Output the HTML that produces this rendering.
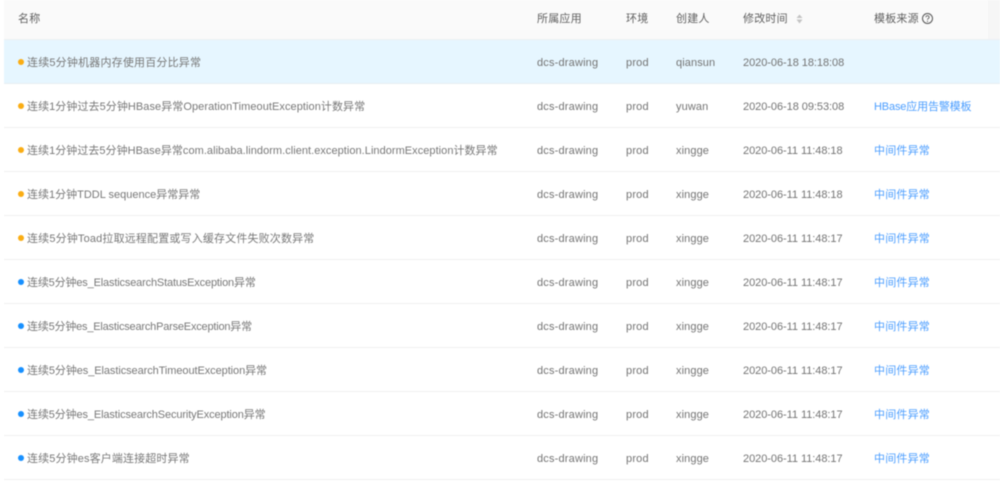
<!DOCTYPE html>
<html><head><meta charset="utf-8">
<style>
html,body{margin:0;padding:0;background:#fff;width:1000px;height:482px;overflow:hidden}
body{font-family:"Liberation Sans","Noto Sans CJK SC",sans-serif;font-size:11px;color:#737373;position:relative}
#w{position:absolute;left:0;top:0;width:1000px;height:482px;filter:blur(.45px)}
.hd{position:absolute;left:4px;top:0;width:996px;height:39px;background:#fafafa;border-bottom:1px solid #eef0f2}
.hd2{position:absolute;left:988px;top:0;width:12px;height:39px;background:#f6f6f6}
.r{position:absolute;left:4px;width:996px;height:43px;border-bottom:1px solid #f0f0f0}
.r.a{background:#e6f6ff;border-bottom-color:#e8eef2}
.r span,.hd span{position:absolute;white-space:nowrap;line-height:16px;top:15px}
.hd span{top:11px;color:#5f5f5f;letter-spacing:.2px}
.c1{left:23px;width:500px;color:#787878}
.c2{left:533px;letter-spacing:.18px}.c3{left:622px;letter-spacing:.2px}.c4{left:672px;letter-spacing:.1px}.c5{left:739px;letter-spacing:-.05px}
.c6{left:870px;color:#4a9dff}
.d{position:absolute;left:14px;top:19px;width:6px;height:6px;border-radius:50%}
.o{background:#faad14}.b{background:#1890ff}
svg{position:absolute}
</style></head><body><div id="w">
<div class="hd">
<span style="left:14px">名称</span>
<span style="left:533px">所属应用</span>
<span style="left:622px">环境</span>
<span style="left:672px">创建人</span>
<span style="left:739px">修改时间</span>
<span style="left:870px">模板来源</span>
</div>
<div class="hd2"></div>
<svg style="left:796px;top:14px" width="7" height="10" viewBox="0 0 7 10"><path d="M3.500 .5L6.500 4H.5z M.5 5.500h6L3.500 9.500z" fill="#c4c4c4"/></svg>
<svg style="left:921px;top:12px" width="13" height="13" viewBox="0 0 13 13"><circle cx="6.500" cy="6.500" r="5" fill="none" stroke="#555" stroke-width="1"/><path d="M4.900 5.200a1.600 1.500 0 1 1 2.400 1.300c-.6.400-.8.600-.8 1.200" fill="none" stroke="#555" stroke-width=".9"/><circle cx="6.500" cy="9.300" r=".6" fill="#555"/></svg>

<div class="r a" style="top:40px"><i class="d o"></i><span class="c1" style="letter-spacing:.19px">连续5分钟机器内存使用百分比异常</span><span class="c2">dcs-drawing</span><span class="c3">prod</span><span class="c4">qiansun</span><span class="c5">2020-06-18 18:18:08</span></div>
<div class="r" style="top:84px"><i class="d o"></i><span class="c1" style="letter-spacing:.065px">连续1分钟过去5分钟HBase异常OperationTimeoutException计数异常</span><span class="c2">dcs-drawing</span><span class="c3">prod</span><span class="c4">yuwan</span><span class="c5">2020-06-18 09:53:08</span><span class="c6" style="letter-spacing:-.15px">HBase应用告警模板</span></div>
<div class="r" style="top:128px"><i class="d o"></i><span class="c1" style="letter-spacing:.04px">连续1分钟过去5分钟HBase异常com.alibaba.lindorm.client.exception.LindormException计数异常</span><span class="c2">dcs-drawing</span><span class="c3">prod</span><span class="c4">xingge</span><span class="c5">2020-06-11 11:48:18</span><span class="c6" style="letter-spacing:.2px">中间件异常</span></div>
<div class="r" style="top:172px"><i class="d o"></i><span class="c1">连续1分钟TDDL sequence异常异常</span><span class="c2">dcs-drawing</span><span class="c3">prod</span><span class="c4">xingge</span><span class="c5">2020-06-11 11:48:18</span><span class="c6" style="letter-spacing:.2px">中间件异常</span></div>
<div class="r" style="top:216px"><i class="d o"></i><span class="c1" style="letter-spacing:.16px">连续5分钟Toad拉取远程配置或写入缓存文件失败次数异常</span><span class="c2">dcs-drawing</span><span class="c3">prod</span><span class="c4">xingge</span><span class="c5">2020-06-11 11:48:17</span><span class="c6" style="letter-spacing:.2px">中间件异常</span></div>
<div class="r" style="top:260px"><i class="d b"></i><span class="c1" style="letter-spacing:-.16px">连续5分钟es_ElasticsearchStatusException异常</span><span class="c2">dcs-drawing</span><span class="c3">prod</span><span class="c4">xingge</span><span class="c5">2020-06-11 11:48:17</span><span class="c6" style="letter-spacing:.2px">中间件异常</span></div>
<div class="r" style="top:304px"><i class="d b"></i><span class="c1" style="letter-spacing:-.2px">连续5分钟es_ElasticsearchParseException异常</span><span class="c2">dcs-drawing</span><span class="c3">prod</span><span class="c4">xingge</span><span class="c5">2020-06-11 11:48:17</span><span class="c6" style="letter-spacing:.2px">中间件异常</span></div>
<div class="r" style="top:348px"><i class="d b"></i><span class="c1" style="letter-spacing:-.075px">连续5分钟es_ElasticsearchTimeoutException异常</span><span class="c2">dcs-drawing</span><span class="c3">prod</span><span class="c4">xingge</span><span class="c5">2020-06-11 11:48:17</span><span class="c6" style="letter-spacing:.2px">中间件异常</span></div>
<div class="r" style="top:392px"><i class="d b"></i><span class="c1" style="letter-spacing:-.12px">连续5分钟es_ElasticsearchSecurityException异常</span><span class="c2">dcs-drawing</span><span class="c3">prod</span><span class="c4">xingge</span><span class="c5">2020-06-11 11:48:17</span><span class="c6" style="letter-spacing:.2px">中间件异常</span></div>
<div class="r" style="top:436px"><i class="d b"></i><span class="c1" style="letter-spacing:.125px">连续5分钟es客户端连接超时异常</span><span class="c2">dcs-drawing</span><span class="c3">prod</span><span class="c4">xingge</span><span class="c5">2020-06-11 11:48:17</span><span class="c6" style="letter-spacing:.2px">中间件异常</span></div>
</div></body></html>
